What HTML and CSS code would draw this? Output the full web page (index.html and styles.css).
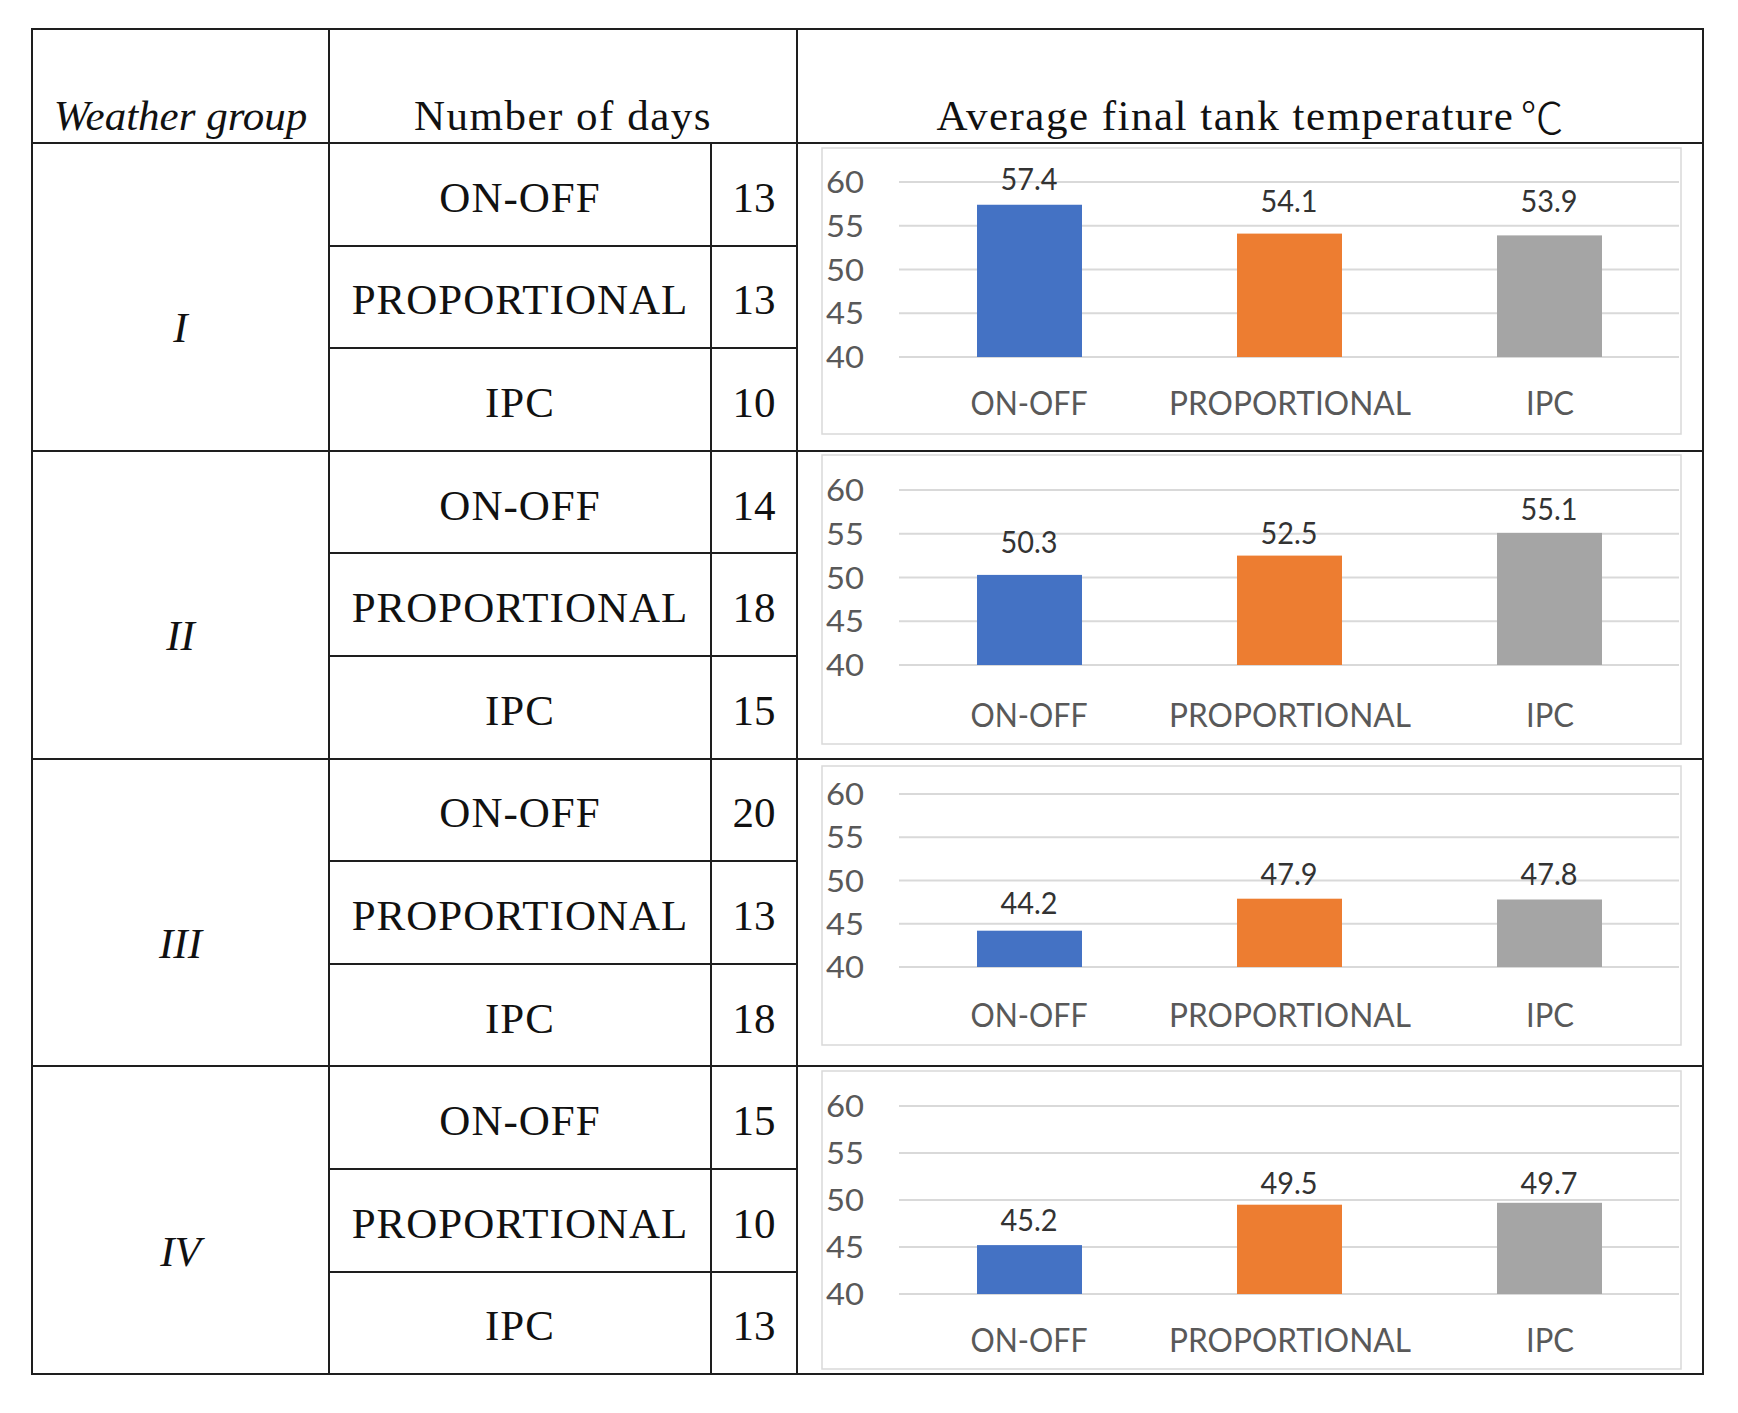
FILE: index.html
```html
<!DOCTYPE html>
<html lang="en">
<head>
<meta charset="utf-8">
<title>Average final tank temperature by weather group</title>
<link rel="stylesheet" href="styles.css">
</head>
<body>
<div class="sheet">
  <div class="cell head head-group">Weather group</div>
  <div class="cell head head-days">Number of days</div>
  <div class="cell head head-temp">Average final tank temperature <span class="deg">℃</span></div>

  <!-- Group I -->
  <div class="cell group">I</div>
  <div class="cell method">ON-OFF</div>
  <div class="cell count">13</div>
  <div class="cell chart">
    <svg viewBox="0 0 904 305" xmlns="http://www.w3.org/2000/svg">
      <rect class="panel" x="24" y="4" width="859" height="286"/>
      <g class="grid">
        <line x1="101" x2="881" y1="38" y2="38"/>
        <line x1="101" x2="881" y1="81.75" y2="81.75"/>
        <line x1="101" x2="881" y1="125.5" y2="125.5"/>
        <line x1="101" x2="881" y1="169.25" y2="169.25"/>
        <line x1="101" x2="881" y1="213" y2="213"/>
      </g>
      <g class="ylab">
        <text x="28" y="49" textLength="38" lengthAdjust="spacingAndGlyphs">60</text>
        <text x="28" y="92.75" textLength="38" lengthAdjust="spacingAndGlyphs">55</text>
        <text x="28" y="136.5" textLength="38" lengthAdjust="spacingAndGlyphs">50</text>
        <text x="28" y="180.25" textLength="38" lengthAdjust="spacingAndGlyphs">45</text>
        <text x="28" y="224" textLength="38" lengthAdjust="spacingAndGlyphs">40</text>
      </g>
      <rect class="bar-blue" x="179" y="60.75" width="105" height="152.25"/>
      <rect class="bar-orange" x="439" y="89.6" width="105" height="123.4"/>
      <rect class="bar-gray" x="699" y="91.4" width="105" height="121.6"/>
      <g class="val">
        <text x="231" y="46" textLength="57" lengthAdjust="spacingAndGlyphs">57.4</text>
        <text x="491" y="68" textLength="57" lengthAdjust="spacingAndGlyphs">54.1</text>
        <text x="751" y="68" textLength="57" lengthAdjust="spacingAndGlyphs">53.9</text>
      </g>
      <g class="cat">
        <text x="231" y="270.5" textLength="117" lengthAdjust="spacingAndGlyphs">ON-OFF</text>
        <text x="492" y="270.5" textLength="242" lengthAdjust="spacingAndGlyphs">PROPORTIONAL</text>
        <text x="752" y="270.5" textLength="48" lengthAdjust="spacingAndGlyphs">IPC</text>
      </g>
    </svg>
  </div>
  <div class="cell method">PROPORTIONAL</div>
  <div class="cell count">13</div>
  <div class="cell method">IPC</div>
  <div class="cell count">10</div>

  <!-- Group II -->
  <div class="cell group">II</div>
  <div class="cell method">ON-OFF</div>
  <div class="cell count">14</div>
  <div class="cell chart">
    <svg viewBox="0 0 904 305" xmlns="http://www.w3.org/2000/svg">
      <rect class="panel" x="24" y="3" width="859" height="289"/>
      <g class="grid">
        <line x1="101" x2="881" y1="38" y2="38"/>
        <line x1="101" x2="881" y1="81.75" y2="81.75"/>
        <line x1="101" x2="881" y1="125.5" y2="125.5"/>
        <line x1="101" x2="881" y1="169.25" y2="169.25"/>
        <line x1="101" x2="881" y1="213" y2="213"/>
      </g>
      <g class="ylab">
        <text x="28" y="49" textLength="38" lengthAdjust="spacingAndGlyphs">60</text>
        <text x="28" y="92.75" textLength="38" lengthAdjust="spacingAndGlyphs">55</text>
        <text x="28" y="136.5" textLength="38" lengthAdjust="spacingAndGlyphs">50</text>
        <text x="28" y="180.25" textLength="38" lengthAdjust="spacingAndGlyphs">45</text>
        <text x="28" y="224" textLength="38" lengthAdjust="spacingAndGlyphs">40</text>
      </g>
      <rect class="bar-blue" x="179" y="122.9" width="105" height="90.1"/>
      <rect class="bar-orange" x="439" y="103.6" width="105" height="109.4"/>
      <rect class="bar-gray" x="699" y="80.9" width="105" height="132.1"/>
      <g class="val">
        <text x="231" y="101" textLength="57" lengthAdjust="spacingAndGlyphs">50.3</text>
        <text x="491" y="92" textLength="57" lengthAdjust="spacingAndGlyphs">52.5</text>
        <text x="751" y="68" textLength="57" lengthAdjust="spacingAndGlyphs">55.1</text>
      </g>
      <g class="cat">
        <text x="231" y="274.5" textLength="117" lengthAdjust="spacingAndGlyphs">ON-OFF</text>
        <text x="492" y="274.5" textLength="242" lengthAdjust="spacingAndGlyphs">PROPORTIONAL</text>
        <text x="752" y="274.5" textLength="48" lengthAdjust="spacingAndGlyphs">IPC</text>
      </g>
    </svg>
  </div>
  <div class="cell method">PROPORTIONAL</div>
  <div class="cell count">18</div>
  <div class="cell method">IPC</div>
  <div class="cell count">15</div>

  <!-- Group III -->
  <div class="cell group">III</div>
  <div class="cell method">ON-OFF</div>
  <div class="cell count">20</div>
  <div class="cell chart">
    <svg viewBox="0 0 904 305" xmlns="http://www.w3.org/2000/svg">
      <rect class="panel" x="24" y="6" width="859" height="279"/>
      <g class="grid">
        <line x1="101" x2="881" y1="34" y2="34"/>
        <line x1="101" x2="881" y1="77.25" y2="77.25"/>
        <line x1="101" x2="881" y1="120.5" y2="120.5"/>
        <line x1="101" x2="881" y1="163.75" y2="163.75"/>
        <line x1="101" x2="881" y1="207" y2="207"/>
      </g>
      <g class="ylab">
        <text x="28" y="45" textLength="38" lengthAdjust="spacingAndGlyphs">60</text>
        <text x="28" y="88.25" textLength="38" lengthAdjust="spacingAndGlyphs">55</text>
        <text x="28" y="131.5" textLength="38" lengthAdjust="spacingAndGlyphs">50</text>
        <text x="28" y="174.75" textLength="38" lengthAdjust="spacingAndGlyphs">45</text>
        <text x="28" y="218" textLength="38" lengthAdjust="spacingAndGlyphs">40</text>
      </g>
      <rect class="bar-blue" x="179" y="170.7" width="105" height="36.3"/>
      <rect class="bar-orange" x="439" y="138.7" width="105" height="68.3"/>
      <rect class="bar-gray" x="699" y="139.5" width="105" height="67.5"/>
      <g class="val">
        <text x="231" y="154" textLength="57" lengthAdjust="spacingAndGlyphs">44.2</text>
        <text x="491" y="125" textLength="57" lengthAdjust="spacingAndGlyphs">47.9</text>
        <text x="751" y="125" textLength="57" lengthAdjust="spacingAndGlyphs">47.8</text>
      </g>
      <g class="cat">
        <text x="231" y="266.5" textLength="117" lengthAdjust="spacingAndGlyphs">ON-OFF</text>
        <text x="492" y="266.5" textLength="242" lengthAdjust="spacingAndGlyphs">PROPORTIONAL</text>
        <text x="752" y="266.5" textLength="48" lengthAdjust="spacingAndGlyphs">IPC</text>
      </g>
    </svg>
  </div>
  <div class="cell method">PROPORTIONAL</div>
  <div class="cell count">13</div>
  <div class="cell method">IPC</div>
  <div class="cell count">18</div>

  <!-- Group IV -->
  <div class="cell group">IV</div>
  <div class="cell method">ON-OFF</div>
  <div class="cell count">15</div>
  <div class="cell chart">
    <svg viewBox="0 0 904 305" xmlns="http://www.w3.org/2000/svg">
      <rect class="panel" x="24" y="4" width="859" height="298"/>
      <g class="grid">
        <line x1="101" x2="881" y1="39" y2="39"/>
        <line x1="101" x2="881" y1="86" y2="86"/>
        <line x1="101" x2="881" y1="133" y2="133"/>
        <line x1="101" x2="881" y1="180" y2="180"/>
        <line x1="101" x2="881" y1="227" y2="227"/>
      </g>
      <g class="ylab">
        <text x="28" y="50" textLength="38" lengthAdjust="spacingAndGlyphs">60</text>
        <text x="28" y="97" textLength="38" lengthAdjust="spacingAndGlyphs">55</text>
        <text x="28" y="144" textLength="38" lengthAdjust="spacingAndGlyphs">50</text>
        <text x="28" y="191" textLength="38" lengthAdjust="spacingAndGlyphs">45</text>
        <text x="28" y="238" textLength="38" lengthAdjust="spacingAndGlyphs">40</text>
      </g>
      <rect class="bar-blue" x="179" y="178.1" width="105" height="48.9"/>
      <rect class="bar-orange" x="439" y="137.7" width="105" height="89.3"/>
      <rect class="bar-gray" x="699" y="135.8" width="105" height="91.2"/>
      <g class="val">
        <text x="231" y="164" textLength="57" lengthAdjust="spacingAndGlyphs">45.2</text>
        <text x="491" y="127" textLength="57" lengthAdjust="spacingAndGlyphs">49.5</text>
        <text x="751" y="127" textLength="57" lengthAdjust="spacingAndGlyphs">49.7</text>
      </g>
      <g class="cat">
        <text x="231" y="284.5" textLength="117" lengthAdjust="spacingAndGlyphs">ON-OFF</text>
        <text x="492" y="284.5" textLength="242" lengthAdjust="spacingAndGlyphs">PROPORTIONAL</text>
        <text x="752" y="284.5" textLength="48" lengthAdjust="spacingAndGlyphs">IPC</text>
      </g>
    </svg>
  </div>
  <div class="cell method">PROPORTIONAL</div>
  <div class="cell count">10</div>
  <div class="cell method">IPC</div>
  <div class="cell count">13</div>
</div>
</body>
</html>
```

FILE: styles.css
```css
html, body {
  margin: 0;
  padding: 0;
  background: #ffffff;
}

.sheet {
  display: grid;
  grid-template-columns: 297px 382px 86px 906px;
  grid-template-rows: 114px repeat(12, 102.6px);
  width: max-content;
  margin: 28px 0 0 31px;
  border-top: 2px solid #1e1e1e;
  border-left: 2px solid #1e1e1e;
  font-family: "Liberation Serif", "Times New Roman", serif;
  font-size: 43px;
  color: #111111;
}

.cell {
  box-sizing: border-box;
  border-right: 2px solid #1e1e1e;
  border-bottom: 2px solid #1e1e1e;
  display: flex;
  align-items: center;
  justify-content: center;
  line-height: 1;
  white-space: nowrap;
}

.head {
  align-items: flex-end;
  padding-bottom: 5px;
  letter-spacing: 1.5px;
}

.head-group {
  grid-column: 1;
  font-style: italic;
  letter-spacing: 0;
}

.head-days {
  grid-column: 2 / span 2;
}

.head-temp {
  grid-column: 4;
}

.deg {
  font-family: "Noto Sans CJK SC", sans-serif;
  font-weight: 300;
  letter-spacing: 0;
  margin-left: 6px;
}

.group {
  grid-column: 1;
  grid-row: span 3;
  font-style: italic;
  padding-top: 62px;
}

.method {
  grid-column: 2;
  padding-top: 6px;
  letter-spacing: 1px;
}

.count {
  grid-column: 3;
  padding-top: 6px;
}

.chart {
  grid-column: 4;
  grid-row: span 3;
  display: block;
}

.chart svg {
  display: block;
  width: 904px;
  height: 305px;
  overflow: visible;
}

.panel {
  fill: #ffffff;
  stroke: #d9d9d9;
  stroke-width: 1.5;
}

.grid line {
  stroke: #d9d9d9;
  stroke-width: 2;
}

.bar-blue { fill: #4472c4; }
.bar-orange { fill: #ed7d31; }
.bar-gray { fill: #a5a5a5; }

.ylab text,
.val text,
.cat text {
  font-family: Lato, "Open Sans", sans-serif;
}

.ylab text {
  font-size: 31px;
  fill: #595959;
}

.val text {
  font-size: 30px;
  fill: #333333;
  text-anchor: middle;
}

.cat text {
  font-size: 32px;
  fill: #595959;
  text-anchor: middle;
}
```
